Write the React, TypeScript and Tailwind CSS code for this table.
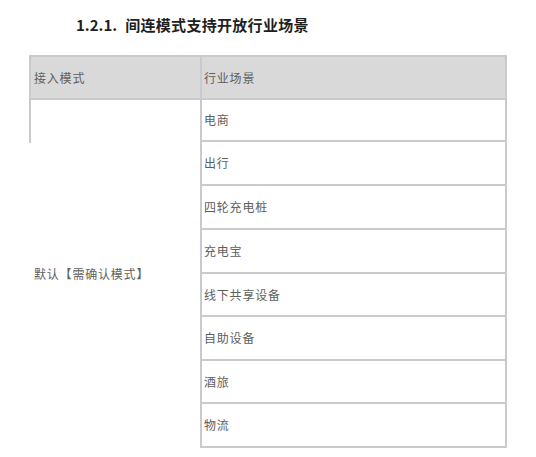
const rows: { name: string; h: string }[] = [
  { name: "电商", h: "h-[42px]" },
  { name: "出行", h: "h-[44px]" },
  { name: "四轮充电桩", h: "h-[44px]" },
  { name: "充电宝", h: "h-[44px]" },
  { name: "线下共享设备", h: "h-[43px]" },
  { name: "自助设备", h: "h-[44px]" },
  { name: "酒旅", h: "h-[43px]" },
  { name: "物流", h: "h-[44px]" },
];

export default function App() {
  return (
    <div
      className="w-[536px] h-[457px] bg-white pt-[15px]"
      style={{ fontFamily: '"Noto Sans CJK SC", "Noto Sans", sans-serif' }}
    >
      <h2 className="pl-[76px] text-[15px] leading-[20px] font-bold text-[#1f1f1f]">
        1.2.1.<span className="ml-[8px] tracking-[0.3px]">间连模式支持开放行业场景</span>
      </h2>

      <div className="mt-[20px] ml-[29px] w-[478px] text-[12px] tracking-[0.8px] text-[#5e5e5e]">
        <div className="flex h-[45px] border-2 border-[#cacace] bg-[#d9d9d9]">
          <div className="w-[169px] flex items-center pl-[3px]">接入模式</div>
          <div className="flex-1 flex items-center pl-[2px] border-l-2 border-[#cacace]">行业场景</div>
        </div>

        <div className="flex">
          <div className="relative w-[171px] flex items-center pl-[5px]">
            <div className="absolute left-0 top-0 h-[43px] w-[2px] bg-[#cacace]" />
            默认【需确认模式】
          </div>
          <div className="flex-1 flex flex-col">
            {rows.map((r) => (
              <div
                key={r.name}
                className={`${r.h} flex items-center pl-[2px] border-l-2 border-r-2 border-b-2 border-[#cacace]`}
              >
                {r.name}
              </div>
            ))}
          </div>
        </div>
      </div>
    </div>
  );
}
